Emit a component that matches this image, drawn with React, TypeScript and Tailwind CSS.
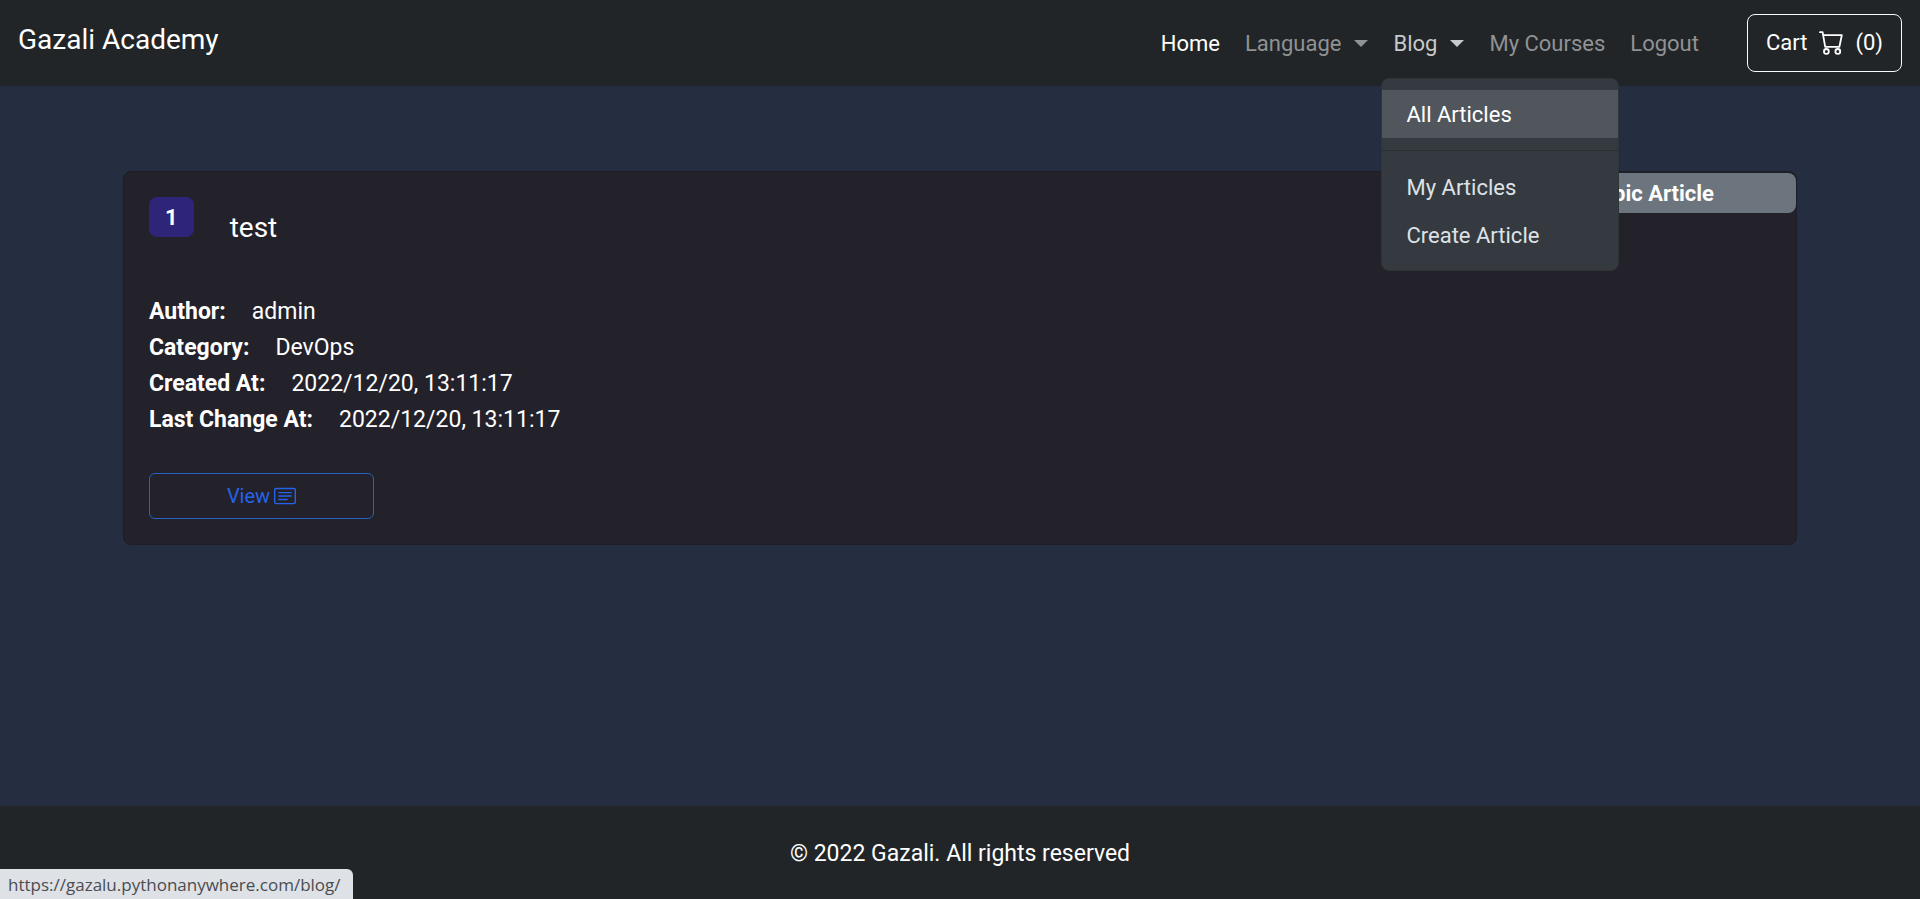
import React from "react";
import { BsCardText } from "react-icons/bs";

function Caret() {
  return <span className="ml-[13px] mb-1 inline-block border-x-[7px] border-t-[7px] border-x-transparent border-t-current align-middle" />;
}

function CartIcon() {
  return (
    <svg viewBox="0 0 24 24" fill="none" stroke="currentColor" strokeWidth="1.8" strokeLinecap="round" strokeLinejoin="round" className="size-6" aria-hidden="true">
      <path d="M1 1.2h2.6L6.2 15.8h14.2L22.8 4.2H4.2" />
      <circle cx="7.4" cy="20.4" r="2.4" />
      <circle cx="18.8" cy="20.4" r="2.4" />
    </svg>
  );
}

const details = [
  ["Author:", "admin"],
  ["Category:", "DevOps"],
  ["Created At:", "2022/12/20, 13:11:17"],
  ["Last Change At:", "2022/12/20, 13:11:17"],
];

export default function App() {
  return (
    <div className="flex min-h-screen flex-col bg-[#252d40] font-['Roboto',sans-serif] text-[22px] leading-9 text-white">
      <header className="flex items-center justify-between bg-[#212527] px-[18px] py-[14px]">
        <a href="#" className="pb-[6px] text-[28px]">Gazali Academy</a>
        <div className="flex items-center">
          <nav aria-label="Main" className="mr-12 flex items-center gap-[25px] pt-[2px] text-[#909294]">
            <a href="#" className="text-white">Home</a>
            <button type="button">Language<Caret /></button>
            <div className="relative">
              <button type="button" aria-expanded="true" className="text-[#c8c9ca]">Blog<Caret /></button>
              <div className="absolute top-[52px] -left-3 z-10 w-[238px] rounded-lg border border-[#2f3438] bg-[#343a40] py-[11px] text-[#dee2e6]">
                <a href="#" className="block bg-[#51565c] px-6 pt-[7px] pb-[5px] text-white">All Articles</a>
                <hr className="my-3 border-[#2a2f33]" />
                <a href="#" className="block px-6 pt-[7px] pb-[5px]">My Articles</a>
                <a href="#" className="block px-6 pt-[7px] pb-[5px]">Create Article</a>
              </div>
            </div>
            <a href="#">My Courses</a>
            <a href="#">Logout</a>
          </nav>
          <button type="button" className="flex items-center gap-3 rounded-lg border border-[#f8f9fa] px-[18px] py-[10px]">
            Cart <CartIcon /> (0)
          </button>
        </div>
      </header>

      <main className="flex-1 px-[123px] pt-[85px]">
        <article className="relative rounded-lg border border-[#1e1e29] bg-[#232129] px-[25px] py-[25px]">
          <span className="absolute top-px right-0 rounded-lg bg-[#6c757d] px-[82px] pt-[3px] pb-px font-bold">Arabic Article</span>
          <div className="flex items-start gap-9">
            <span className="rounded-lg bg-[#2e2478] px-4 pt-[3px] pb-px font-bold">1</span>
            <h1 className="pt-[13px] text-[28px]">test</h1>
          </div>
          <dl className="pt-12 text-[23px]">
            {details.map(([label, value]) => (
              <div key={label} className="flex gap-[26px]">
                <dt className="font-bold">{label}</dt>
                <dd>{value}</dd>
              </div>
            ))}
          </dl>
          <button type="button" className="mt-[35px] flex h-[46px] w-[225px] items-center justify-center gap-1 rounded-md border border-[#2563c4] text-[20px] text-[#2563eb]">
            View <BsCardText className="size-[22px]" />
          </button>
        </article>
      </main>

      <footer className="bg-[#212527] pt-[30px] pb-[27px] text-center text-[23px]">© 2022 Gazali. All rights reserved</footer>
      <div role="status" className="fixed bottom-0 left-0 rounded-tr-md bg-[#dee1e6] pt-1 pr-3 pb-[2px] pl-2 font-['Open_Sans',sans-serif] text-[17px] leading-6 text-[#4a4d51]">
        https://gazalu.pythonanywhere.com/blog/
      </div>
    </div>
  );
}
